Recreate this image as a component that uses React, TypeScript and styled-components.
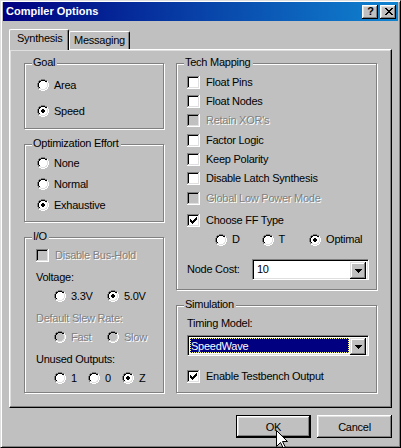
import React from "react";
import styled, { createGlobalStyle } from "styled-components";

const GlobalStyle = createGlobalStyle`
  html, body { margin: 0; padding: 0; background: #c0c0c0; }
  body { font-family: "Liberation Sans", Arial, sans-serif; font-size: 11px; color: #000; }
  * { box-sizing: border-box; }
`;

const Window = styled.div`
  position: relative;
  width: 401px;
  height: 448px;
  background: #c0c0c0;
  border: 1px solid;
  border-color: #dfdfdf #000 #000 #dfdfdf;
  box-shadow: inset 1px 1px 0 #fff, inset -1px -1px 0 #808080;
  padding: 1px 2px 2px 2px;
  display: flex;
  flex-direction: column;
  overflow: hidden;
`;

const TitleBar = styled.div`
  height: 19px;
  flex: none;
  display: flex;
  align-items: center;
  padding: 0 2px 0 3px;
  background: linear-gradient(to right, #000080, #1084d0);
  color: #fff;
  font-weight: bold;
  font-size: 11px;
`;

const TitleText = styled.span`
  flex: 1;
  line-height: 13px;
`;

const TitleButtons = styled.div`
  display: flex;
  gap: 2px;
`;

const TitleButton = styled.div`
  width: 16px;
  height: 14px;
  background: #c0c0c0;
  box-shadow: inset -1px -1px 0 #000, inset 1px 1px 0 #fff, inset -2px -2px 0 #808080, inset 2px 2px 0 #dfdfdf;
  display: flex;
  align-items: center;
  justify-content: center;
  color: #000;
  font-weight: bold;
  font-size: 11px;
  line-height: 11px;
  padding-left: 1px;
`;

const Body = styled.div`
  flex: 1;
  display: flex;
  flex-direction: column;
  padding: 8px 6px 0 6px;
`;

const TabStrip = styled.div`
  display: flex;
  align-items: flex-end;
  height: 20px;
`;

const Tab = styled.div<{ $active?: boolean; $w: number }>`
  position: relative;
  z-index: ${(p) => (p.$active ? 1 : 0)};
  width: ${(p) => p.$w}px;
  height: ${(p) => (p.$active ? 21 : 18)}px;
  margin-bottom: ${(p) => (p.$active ? -1 : 0)}px;
  background: #c0c0c0;
  border-top: 1px solid #fff;
  border-left: 1px solid #fff;
  border-right: 1px solid #000;
  border-radius: 2px 2px 0 0;
  box-shadow: inset -1px 0 0 #808080;
  padding-top: 2px;
  padding-left: ${(p) => (p.$active ? 7 : 4)}px;
  line-height: 13px;
  letter-spacing: -0.25px;
`;

const Panel = styled.div`
  width: 383px;
  height: 359px;
  border: 1px solid;
  border-color: #fff #000 #000 #fff;
  box-shadow: inset -1px -1px 0 #808080, inset 1px 1px 0 #dfdfdf;
  padding: 13px 14px 0 14px;
  display: flex;
  gap: 12px;
`;

const Column = styled.div<{ $w: number }>`
  width: ${(p) => p.$w}px;
  display: flex;
  flex-direction: column;
  gap: 15px;
`;

const Group = styled.div<{ $h: number; $pt: number; $pl: number; $gap: number }>`
  position: relative;
  height: ${(p) => p.$h}px;
  border: 1px solid #808080;
  box-shadow: inset 1px 1px 0 #fff, 1px 1px 0 #fff;
  padding: ${(p) => p.$pt}px 0 0 ${(p) => p.$pl}px;
  display: flex;
  flex-direction: column;
  gap: ${(p) => p.$gap}px;
`;

const GroupLabel = styled.span`
  position: absolute;
  top: -8px;
  left: 7px;
  padding: 0 2px 0 1px;
  background: #c0c0c0;
  line-height: 13px;
  letter-spacing: -0.25px;
`;

const Row = styled.div<{ $disabled?: boolean; $gap?: number; $mt?: number; $indent?: number; $h?: number }>`
  display: flex;
  align-items: center;
  height: ${(p) => p.$h ?? 16}px;
  flex: none;
  gap: ${(p) => p.$gap ?? 6}px;
  margin-top: ${(p) => p.$mt ?? 0}px;
  padding-left: ${(p) => p.$indent ?? 0}px;
  line-height: 13px;
  letter-spacing: -0.25px;
  color: ${(p) => (p.$disabled ? "#808080" : "#000")};
  text-shadow: ${(p) => (p.$disabled ? "1px 1px 0 #fff" : "none")};
`;

const Option = styled.div<{ $w?: number }>`
  display: flex;
  align-items: center;
  gap: 5px;
  width: ${(p) => (p.$w ? `${p.$w}px` : "auto")};
`;

const Sub = styled.div`
  display: flex;
  flex-direction: column;
  gap: 3px;
`;

const Stack = styled.div`
  display: flex;
  flex-direction: column;
  gap: 6px;
`;

const FieldLabel = styled.span<{ $w?: number }>`
  width: ${(p) => (p.$w ? `${p.$w}px` : "auto")};
  line-height: 13px;
  letter-spacing: -0.25px;
`;

const Combo = styled.div<{ $w: number; $mt?: number }>`
  width: ${(p) => p.$w}px;
  height: 21px;
  flex: none;
  margin-top: ${(p) => p.$mt ?? 0}px;
  border: 1px solid;
  border-color: #808080 #fff #fff #808080;
  box-shadow: inset 1px 1px 0 #000, inset -1px -1px 0 #dfdfdf;
  background: #fff;
  padding: 2px;
  display: flex;
`;

const ComboField = styled.div<{ $selected?: boolean }>`
  flex: 1;
  display: flex;
  align-items: center;
  margin-right: 1px;
  padding-left: ${(p) => (p.$selected ? 1 : 2)}px;
  letter-spacing: -0.25px;
  background: ${(p) => (p.$selected ? "#000080" : "transparent")};
  color: ${(p) => (p.$selected ? "#fff" : "#000")};
  outline: ${(p) => (p.$selected ? "1px dotted #ffff80" : "none")};
  outline-offset: -1px;
`;

const DropButton = styled.div`
  width: 16px;
  height: 17px;
  background: #c0c0c0;
  box-shadow: inset -1px -1px 0 #000, inset 1px 1px 0 #dfdfdf, inset -2px -2px 0 #808080, inset 2px 2px 0 #fff;
  display: flex;
  align-items: center;
  justify-content: center;
`;

const ButtonRow = styled.div`
  display: flex;
  justify-content: flex-end;
  gap: 6px;
  margin-top: 7px;
`;

const PushButton = styled.div<{ $default?: boolean }>`
  width: 75px;
  height: 23px;
  display: flex;
  align-items: center;
  justify-content: center;
  background: #c0c0c0;
  letter-spacing: -0.25px;
  border: ${(p) => (p.$default ? "1px solid #000" : "none")};
  box-shadow: inset -1px -1px 0 #000, inset 1px 1px 0 #fff, inset -2px -2px 0 #808080, inset 2px 2px 0 #dfdfdf;
  padding-top: 1px;
`;

const Cursor = styled.svg`
  position: absolute;
  left: 275px;
  top: 429px;
`;

/* ---------- pixel glyphs ---------- */

function Pixels({ rows, colors, w, h, style }: { rows: string[]; colors: Record<string, string>; w: number; h: number; style?: React.CSSProperties }) {
  const rects: React.ReactNode[] = [];
  rows.forEach((row, y) => {
    row.split("").forEach((c, x) => {
      if (colors[c]) rects.push(<rect key={`${x}-${y}`} x={x} y={y} width={1} height={1} fill={colors[c]} />);
    });
  });
  return (
    <svg width={w} height={h} viewBox={`0 0 ${w} ${h}`} shapeRendering="crispEdges" style={{ flex: "none", display: "block", ...style }}>
      {rects}
    </svg>
  );
}

const RADIO_ROWS = [
  "....gggg....",
  "..ggkkkkgg..",
  ".gkkffffkkw.",
  ".gkfffffflw.",
  "gkfffddffflw",
  "gkffddddfflw",
  "gkffddddfflw",
  "gkfffddffflw",
  ".gkfffffflw.",
  ".gllffffllw.",
  "..wwllllww..",
  "....wwww....",
];

function Radio({ checked, disabled }: { checked?: boolean; disabled?: boolean }) {
  const fill = disabled ? "#c0c0c0" : "#ffffff";
  const colors: Record<string, string> = {
    g: "#808080",
    w: "#ffffff",
    k: "#000000",
    l: "#dfdfdf",
    f: fill,
    d: checked ? (disabled ? "#808080" : "#000000") : fill,
  };
  return <Pixels rows={RADIO_ROWS} colors={colors} w={12} h={12} style={{ marginLeft: 1 }} />;
}

const TICK_ROWS = ["......#", ".....##", "#...###", "##.###.", "#####..", ".###...", "..#...."];

function Checkbox({ checked, disabled }: { checked?: boolean; disabled?: boolean }) {
  const fill = disabled ? "#c0c0c0" : "#fff";
  return (
    <svg width={13} height={13} viewBox="0 0 13 13" shapeRendering="crispEdges" style={{ flex: "none", display: "block" }}>
      <rect x={0} y={0} width={13} height={13} fill="#fff" />
      <rect x={0} y={0} width={12} height={12} fill="#808080" />
      <rect x={1} y={1} width={11} height={11} fill="#dfdfdf" />
      <rect x={1} y={1} width={10} height={10} fill="#000" />
      <rect x={2} y={2} width={9} height={9} fill={fill} />
      {checked &&
        TICK_ROWS.map((row, y) =>
          row.split("").map((c, x) => (c === "#" ? <rect key={`${x}-${y}`} x={x + 3} y={y + 3} width={1} height={1} fill="#000" /> : null))
        )}
    </svg>
  );
}

function DownArrow() {
  return (
    <Pixels
      rows={["#######", ".#####.", "..###..", "...#..."]}
      colors={{ "#": "#000" }}
      w={7}
      h={4}
      style={{ marginTop: 1 }}
    />
  );
}

function CloseGlyph() {
  return (
    <Pixels
      rows={["##....##", ".##..##.", "..####..", "...##...", "..####..", ".##..##.", "##....##"]}
      colors={{ "#": "#000" }}
      w={8}
      h={7}
    />
  );
}

/* ---------- composite rows ---------- */

function CheckRow({ label, checked, disabled, mt }: { label: string; checked?: boolean; disabled?: boolean; mt?: number }) {
  return (
    <Row $disabled={disabled} $mt={mt}>
      <Checkbox checked={checked} disabled={disabled} />
      <span>{label}</span>
    </Row>
  );
}

function RadioRow({ label, checked }: { label: string; checked?: boolean }) {
  return (
    <Row $gap={5}>
      <Radio checked={checked} />
      <span>{label}</span>
    </Row>
  );
}

function RadioSet({ items, widths, indent, disabled, selected }: { items: string[]; widths: number[]; indent: number; disabled?: boolean; selected?: number }) {
  return (
    <Row $indent={indent} $gap={0} $disabled={disabled}>
      {items.map((it, i) => (
        <Option key={it} $w={widths[i]}>
          <Radio checked={selected === i} disabled={disabled} />
          <span>{it}</span>
        </Option>
      ))}
    </Row>
  );
}

export default function App() {
  return (
    <>
      <GlobalStyle />
      <Window>
        <TitleBar>
          <TitleText>Compiler Options</TitleText>
          <TitleButtons>
            <TitleButton>?</TitleButton>
            <TitleButton>
              <CloseGlyph />
            </TitleButton>
          </TitleButtons>
        </TitleBar>
        <Body>
          <TabStrip>
            <Tab $active $w={60}>Synthesis</Tab>
            <Tab $w={61}>Messaging</Tab>
          </TabStrip>
          <Panel>
            <Column $w={140}>
              <Group $h={66} $pt={13} $pl={11} $gap={10}>
                <GroupLabel>Goal</GroupLabel>
                <RadioRow label="Area" />
                <RadioRow label="Speed" checked />
              </Group>
              <Group $h={78} $pt={10} $pl={11} $gap={5}>
                <GroupLabel>Optimization Effort</GroupLabel>
                <RadioRow label="None" />
                <RadioRow label="Normal" />
                <RadioRow label="Exhaustive" checked />
              </Group>
              <Group $h={156} $pt={9} $pl={11} $gap={6}>
                <GroupLabel>I/O</GroupLabel>
                <CheckRow label="Disable Bus-Hold" disabled />
                <Stack>
                  <Sub>
                    <Row>Voltage:</Row>
                    <RadioSet items={["3.3V", "5.0V"]} widths={[53, 53]} indent={17} selected={1} />
                  </Sub>
                  <Sub>
                    <Row $disabled>Default Slew Rate:</Row>
                    <RadioSet items={["Fast", "Slow"]} widths={[53, 53]} indent={17} disabled />
                  </Sub>
                  <Sub>
                    <Row>Unused Outputs:</Row>
                    <RadioSet items={["1", "0", "Z"]} widths={[34, 34, 30]} indent={17} selected={2} />
                  </Sub>
                </Stack>
              </Group>
            </Column>
            <Column $w={201}>
              <Group $h={227} $pt={10} $pl={10} $gap={3.4}>
                <GroupLabel>Tech Mapping</GroupLabel>
                <CheckRow label="Float Pins" />
                <CheckRow label="Float Nodes" />
                <CheckRow label="Retain XOR's" disabled />
                <CheckRow label="Factor Logic" />
                <CheckRow label="Keep Polarity" />
                <CheckRow label="Disable Latch Synthesis" />
                <CheckRow label="Global Low Power Mode" disabled />
                <CheckRow label="Choose FF Type" checked mt={2.5} />
                <RadioSet items={["D", "T", "Optimal"]} widths={[48, 49, 70]} indent={27} selected={2} />
                <Row $mt={8.4} $h={21} $gap={0}>
                  <FieldLabel $w={65}>Node Cost:</FieldLabel>
                  <Combo $w={117}>
                    <ComboField>10</ComboField>
                    <DropButton>
                      <DownArrow />
                    </DropButton>
                  </Combo>
                </Row>
              </Group>
              <Group $h={88} $pt={11} $pl={10} $gap={0}>
                <GroupLabel>Simulation</GroupLabel>
                <FieldLabel>Timing Model:</FieldLabel>
                <Combo $w={182} $mt={5}>
                  <ComboField $selected>SpeedWave</ComboField>
                  <DropButton>
                    <DownArrow />
                  </DropButton>
                </Combo>
                <CheckRow label="Enable Testbench Output" checked mt={12} />
              </Group>
            </Column>
          </Panel>
          <ButtonRow>
            <PushButton $default>OK</PushButton>
            <PushButton>Cancel</PushButton>
          </ButtonRow>
        </Body>
        <Cursor width={13} height={20} viewBox="0 0 13 20">
          <path d="M0.5 0.5 L0.5 16.5 L4.5 12.5 L7.5 18.5 L9.5 17.5 L6.5 11.5 L11.5 11.5 Z" fill="#fff" stroke="#000" strokeWidth={1} />
        </Cursor>
      </Window>
    </>
  );
}
